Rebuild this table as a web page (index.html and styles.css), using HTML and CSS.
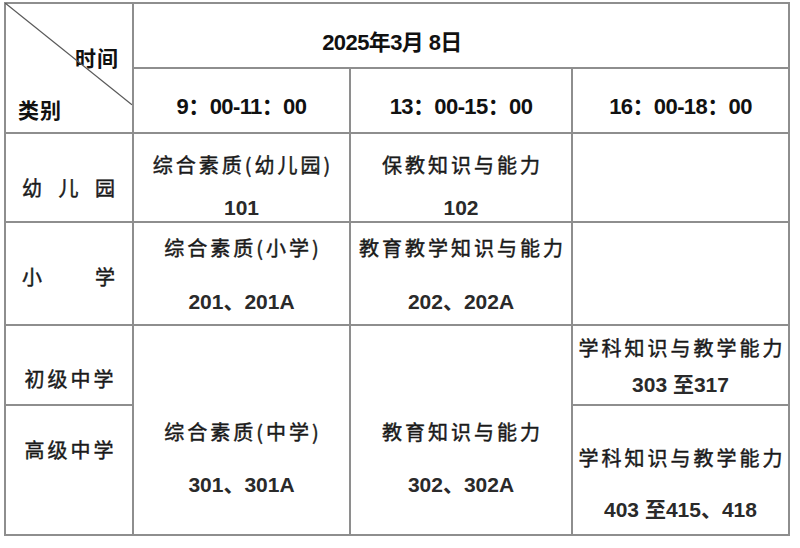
FILE: index.html
```html
<!DOCTYPE html>
<html lang="zh-CN">
<head>
<meta charset="utf-8">
<link rel="stylesheet" href="styles.css">
</head>
<body>
<div class="sheet">
  <div class="cell diag">
    <svg class="slash" viewBox="0 0 126 128" preserveAspectRatio="none"><line x1="0" y1="0" x2="126" y2="101" stroke="#5a5a5a" stroke-width="1.3"/></svg>
    <span class="hd-time">时间</span>
    <span class="hd-cat">类别</span>
  </div>
  <div class="cell date">2025年3月 8日</div>
  <div class="cell time">9：00-11：00</div>
  <div class="cell time">13：00-15：00</div>
  <div class="cell time">16：00-18：00</div>

  <div class="cell cat spread3 rc"><span>幼</span><span>儿</span><span>园</span></div>
  <div class="cell subj rc"><span class="name">综合素质(幼儿园)</span><span class="code">101</span></div>
  <div class="cell subj rc"><span class="name">保教知识与能力</span><span class="code">102</span></div>
  <div class="cell"></div>

  <div class="cell cat spread2 rd"><span>小</span><span>学</span></div>
  <div class="cell subj rd"><span class="name">综合素质(小学)</span><span class="code">201、201A</span></div>
  <div class="cell subj rd"><span class="name">教育教学知识与能力</span><span class="code">202、202A</span></div>
  <div class="cell"></div>

  <div class="cell cat re"><span class="name">初级中学</span></div>
  <div class="cell subj tall"><span class="name">综合素质(中学)</span><span class="code">301、301A</span></div>
  <div class="cell subj tall"><span class="name">教育知识与能力</span><span class="code">302、302A</span></div>
  <div class="cell subj re3"><span class="name">学科知识与教学能力</span><span class="code">303 至317</span></div>

  <div class="cell cat rf"><span class="name">高级中学</span></div>
  <div class="cell subj rf3"><span class="name">学科知识与教学能力</span><span class="code">403 至415、418</span></div>
</div>
</body>
</html>
```

FILE: styles.css
```css
html, body {
  margin: 0;
  padding: 0;
  background: #ffffff;
}

body {
  font-family: "Noto Sans CJK SC", "Liberation Sans", sans-serif;
  color: #1a1a1a;
}

.sheet {
  display: grid;
  grid-template-columns: 126px 215px 220px 215px;
  grid-template-rows: 63px 63px 87px 101px 78px 128px;
  gap: 2px;
  padding: 2px;
  background: #8e8e8e;
  width: max-content;
  margin: 2px 0 0 4px;
}

.cell {
  background: #ffffff;
  display: flex;
  flex-direction: column;
  align-items: center;
  box-sizing: border-box;
  line-height: 28px;
}

/* header corner */
.diag {
  grid-row: 1 / span 2;
  position: relative;
  align-items: stretch;
  padding: 39px 13px 0 12px;
  gap: 24px;
  font-weight: bold;
  font-size: 21px;
  color: #111;
}
.slash {
  position: absolute;
  left: -1px;
  top: -1px;
  width: 127px;
  height: 129px;
}
.hd-time { align-self: flex-end; letter-spacing: 1px; }
.hd-cat { align-self: flex-start; letter-spacing: 1px; }

.date {
  grid-column: 2 / span 3;
  padding: 25px 138px 0 0;
  font-family: "Liberation Sans", "Noto Sans CJK SC", sans-serif;
  font-weight: bold;
  font-size: 22px;
  letter-spacing: -0.6px;
  color: #111;
}

.time {
  padding-top: 24px;
  font-family: "Liberation Sans", "Noto Sans CJK SC", sans-serif;
  font-weight: bold;
  font-size: 22px;
  letter-spacing: -0.6px;
  color: #111;
}

/* body text */
.name {
  font-size: 20px;
  letter-spacing: 3px;
  margin-right: -3px;
  -webkit-text-stroke: 0.45px #1a1a1a;
}
.code {
  font-family: "Liberation Sans", "Noto Sans CJK SC", sans-serif;
  font-size: 21px;
  font-weight: bold;
  color: #2a2a2a;
}

.cat { font-size: 20px; -webkit-text-stroke: 0.45px #1a1a1a; }
.spread3, .spread2 {
  flex-direction: row;
  justify-content: space-between;
  align-items: flex-start;
}
.spread3 { padding-left: 16px; padding-right: 17px; }
.spread2 { padding-left: 16px; padding-right: 17px; }

.subj.rc { padding-top: 17px; gap: 15px; }
.cat.rc { padding-top: 40px; }

.subj.rd { padding-top: 11px; gap: 26px; }
.cat.rd { padding-top: 40px; }

.cat.re { padding-top: 39px; }
.subj.re3 { padding-top: 8px; gap: 9px; }

.subj.tall { grid-row: span 2; padding-top: 92px; gap: 25px; }

.cat.rf { padding-top: 30px; }
.subj.rf3 { padding-top: 38px; gap: 24px; }
```
